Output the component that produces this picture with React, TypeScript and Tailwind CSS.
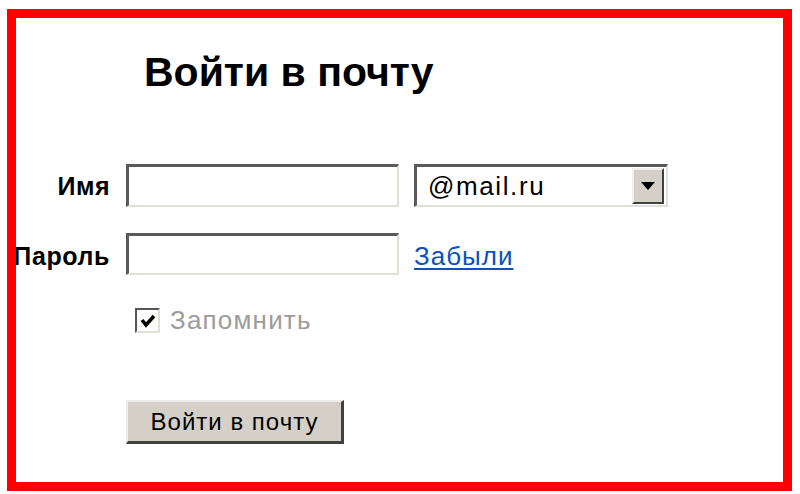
import React from "react";

export default function App() {
  return (
    <div className="w-[800px] h-[494px] bg-white overflow-hidden" style={{ fontFamily: '"Liberation Sans", Arial, sans-serif' }}>
      <div className="ml-[7px] mt-[9px] w-[785px] h-[482px] border-[9px] border-[#ff0000] overflow-hidden">
        <h1 className="ml-[128px] mt-[32px] text-[41px] leading-[44px] font-bold text-black tracking-[0px]">Войти в почту</h1>
        <div className="mt-[70px] flex flex-col">
          <div className="flex items-center h-[43px]">
            <div className="w-[94px] shrink-0 pt-[3px] text-right text-[25px] font-bold text-black tracking-[0.5px] whitespace-nowrap flex justify-end">Имя</div>
            <div className="ml-[16px] w-[273px] h-[43px] border-t-[3px] border-l-[3px] border-b-2 border-r-2 border-t-[#5a5a5a] border-l-[#5a5a5a] border-b-[#e2dfd8] border-r-[#e2dfd8] bg-white" />
            <div className="ml-[15px] w-[254px] h-[43px] border-t-[3px] border-l-[3px] border-b-2 border-r-2 border-t-[#5a5a5a] border-l-[#5a5a5a] border-b-[#e2dfd8] border-r-[#e2dfd8] bg-white flex items-center">
              <span className="ml-[11px] text-[26px] tracking-[1.6px] text-black flex-1">@mail.ru</span>
              <div className="w-[32px] h-[36px] mr-[2px] bg-[#d4d0c8] border-t-2 border-l-2 border-b-2 border-r-2 border-t-[#f2f0ec] border-l-[#f2f0ec] border-b-[#404040] border-r-[#404040] flex items-center justify-center">
                <svg width="14" height="8" viewBox="0 0 14 8"><polygon points="0,0 14,0 7,8" fill="#000" /></svg>
              </div>
            </div>
          </div>
          <div className="flex items-center h-[42px] mt-[26px]">
            <div className="w-[94px] shrink-0 pt-[5px] text-right text-[25px] font-bold text-black tracking-[0.6px] whitespace-nowrap flex justify-end">Пароль</div>
            <div className="ml-[16px] w-[273px] h-[42px] border-t-[3px] border-l-[3px] border-b-2 border-r-2 border-t-[#5a5a5a] border-l-[#5a5a5a] border-b-[#e2dfd8] border-r-[#e2dfd8] bg-white" />
            <a href="#" className="ml-[15px] pt-[4px] text-[26px] tracking-[1px] text-[#0a52be] underline underline-offset-[3px]">Забыли</a>
          </div>
          <div className="flex items-center mt-[33px] ml-[119px] h-[25px]">
            <div className="w-[25px] h-[25px] border-t-2 border-l-2 border-b-2 border-r-2 border-t-[#555] border-l-[#555] border-b-[#e2dfd8] border-r-[#e2dfd8] bg-white flex items-center justify-center">
              <svg width="16" height="14" viewBox="0 0 16 14"><polyline points="2,6 6,11 14,2" fill="none" stroke="#000" strokeWidth="3.6" /></svg>
            </div>
            <span className="ml-[10px] text-[26px] tracking-[1.2px] text-[#9c9c9c]">Запомнить</span>
          </div>
          <div className="mt-[67px] ml-[110px]">
            <button className="w-[218px] h-[44px] bg-[#d4d0c8] border-t-2 border-l-2 border-b-[3px] border-r-[3px] border-t-[#eeece8] border-l-[#eeece8] border-b-[#404040] border-r-[#404040] text-[24px] tracking-[1px] text-black flex items-center justify-center">Войти в почту</button>
          </div>
        </div>
      </div>
    </div>
  );
}
